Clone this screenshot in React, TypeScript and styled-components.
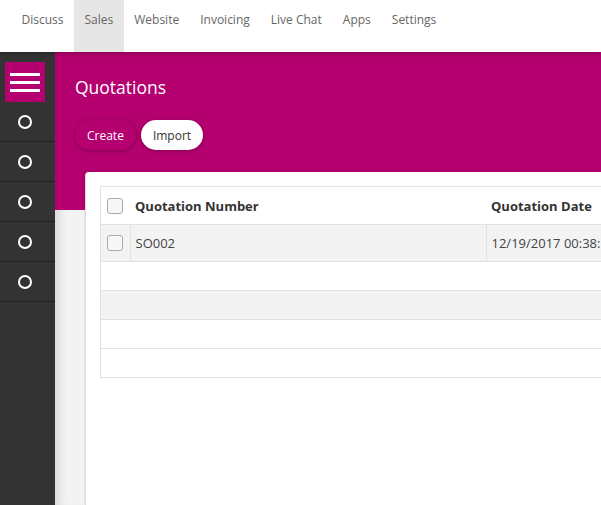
import React from 'react';
import styled, { createGlobalStyle } from 'styled-components';

const GlobalStyle = createGlobalStyle`
  html, body {
    margin: 0;
    padding: 0;
    height: 100%;
    overflow: hidden;
  }
  body {
    font-family: "Comic Sans MS", "Open Sans", "DejaVu Sans", sans-serif;
    background: #f3f3f3;
  }
  #root {
    height: 100%;
  }
`;

const Page = styled.div`
  display: flex;
  flex-direction: column;
  height: 505px;
  width: 601px;
  overflow: hidden;
`;

const TopBar = styled.nav`
  height: 52px;
  display: flex;
  padding-left: 11px;
  background: #fff;
  position: relative;
  z-index: 2;
  box-shadow: 0 1px 4px rgba(0, 0, 0, 0.35);
`;

const MenuItem = styled.a<{ active?: boolean }>`
  display: flex;
  align-items: flex-start;
  padding: 11px 10.5px 0;
  font-size: 12px;
  color: #666;
  background: ${(p) => (p.active ? '#e6e6e6' : 'transparent')};
  cursor: pointer;
`;

const Body = styled.div`
  flex: 1;
  display: flex;
  min-height: 0;
`;

const Sidebar = styled.aside`
  width: 55px;
  flex-shrink: 0;
  background: #333;
  display: flex;
  flex-direction: column;
`;

const Burger = styled.button`
  margin: 10px 10px 0 5px;
  width: 40px;
  height: 40px;
  border: none;
  background: #b5016f;
  display: flex;
  flex-direction: column;
  justify-content: center;
  align-items: center;
  gap: 5px;
  padding: 0;
`;

const BurgerLine = styled.span`
  display: block;
  width: 30px;
  height: 3px;
  background: #fff;
`;

const SideItem = styled.div`
  height: 39px;
  border-bottom: 1px solid #222;
  display: flex;
  align-items: center;
  justify-content: center;
  padding-right: 5px;
`;

const Ring = styled.span`
  width: 10px;
  height: 10px;
  border: 2px solid #fff;
  border-radius: 50%;
`;

const Main = styled.main`
  flex: 1;
  display: flex;
  flex-direction: column;
  position: relative;
  min-width: 0;
  box-shadow: inset 10px 0 10px -6px rgba(0, 0, 0, 0.12);
`;

const Header = styled.header`
  height: 158px;
  flex-shrink: 0;
  background: #b5016f;
  padding: 23px 20px 0;
  box-sizing: border-box;
`;

const Title = styled.h1`
  margin: 0;
  color: #fff;
  font-size: 17.5px;
  font-weight: 400;
`;

const Actions = styled.div`
  display: flex;
  gap: 5px;
  margin-top: 21px;
`;

const Button = styled.button<{ light?: boolean }>`
  height: 30px;
  padding: 0 12px;
  border: none;
  border-radius: 15px;
  font-family: inherit;
  font-size: 12px;
  color: ${(p) => (p.light ? '#333' : '#fff')};
  background: ${(p) => (p.light ? '#fff' : '#b5016f')};
  box-shadow: 0 1px 4px rgba(0, 0, 0, 0.3);
`;

const Card = styled.section`
  margin: -38px 0 0 30px;
  flex: 1;
  background: #fff;
  border-top-left-radius: 4px;
  border-left: 1px solid #ddd;
  padding: 14px 0 0 14px;
  box-shadow: 0 0 3px rgba(0, 0, 0, 0.1);
`;

const Table = styled.table`
  border-collapse: collapse;
  width: 560px;
  border: 1px solid #e2e2e2;
  border-right: none;
  font-size: 13px;
  color: #444;
`;

const HeadCell = styled.th<{ first?: boolean; wide?: boolean }>`
  height: 37px;
  text-align: left;
  font-weight: 700;
  padding: 0 ${(p) => (p.first ? '6px' : '5px')};
  width: ${(p) => (p.first ? '17px' : p.wide ? '346px' : 'auto')};
  color: #333;
`;

const Row = styled.tr<{ shade?: boolean; tall?: boolean }>`
  height: ${(p) => (p.tall ? '37px' : '29px')};
  background: ${(p) => (p.shade ? '#f3f3f3' : '#fff')};
  border-top: 1px solid #e2e2e2;
`;

const Cell = styled.td<{ first?: boolean; divided?: boolean }>`
  padding: 0 ${(p) => (p.first ? '6px' : '5px')};
  border-right: ${(p) => (p.divided ? '1px solid #e2e2e2' : 'none')};
  white-space: nowrap;
`;

const Check = styled.span`
  display: block;
  width: 14px;
  height: 14px;
  border: 1px solid #aaa;
  border-radius: 3px;
  background: #f7f7f7;
`;

const menu = ['Discuss', 'Sales', 'Website', 'Invoicing', 'Live Chat', 'Apps', 'Settings'];

export default function App() {
  return (
    <Page>
      <GlobalStyle />
      <TopBar>
        {menu.map((m) => (
          <MenuItem key={m} active={m === 'Sales'}>
            {m}
          </MenuItem>
        ))}
      </TopBar>
      <Body>
        <Sidebar>
          <Burger>
            <BurgerLine />
            <BurgerLine />
            <BurgerLine />
          </Burger>
          {[0, 1, 2, 3, 4].map((i) => (
            <SideItem key={i}>
              <Ring />
            </SideItem>
          ))}
        </Sidebar>
        <Main>
          <Header>
            <Title>Quotations</Title>
            <Actions>
              <Button>Create</Button>
              <Button light>Import</Button>
            </Actions>
          </Header>
          <Card>
            <Table>
              <thead>
                <tr>
                  <HeadCell first>
                    <Check />
                  </HeadCell>
                  <HeadCell wide>Quotation Number</HeadCell>
                  <HeadCell>Quotation Date</HeadCell>
                </tr>
              </thead>
              <tbody>
                <Row shade tall>
                  <Cell first divided>
                    <Check />
                  </Cell>
                  <Cell divided>SO002</Cell>
                  <Cell>12/19/2017 00:38:12</Cell>
                </Row>
                <Row>
                  <Cell colSpan={3} />
                </Row>
                <Row shade>
                  <Cell colSpan={3} />
                </Row>
                <Row>
                  <Cell colSpan={3} />
                </Row>
                <Row>
                  <Cell colSpan={3} />
                </Row>
              </tbody>
            </Table>
          </Card>
        </Main>
      </Body>
    </Page>
  );
}
